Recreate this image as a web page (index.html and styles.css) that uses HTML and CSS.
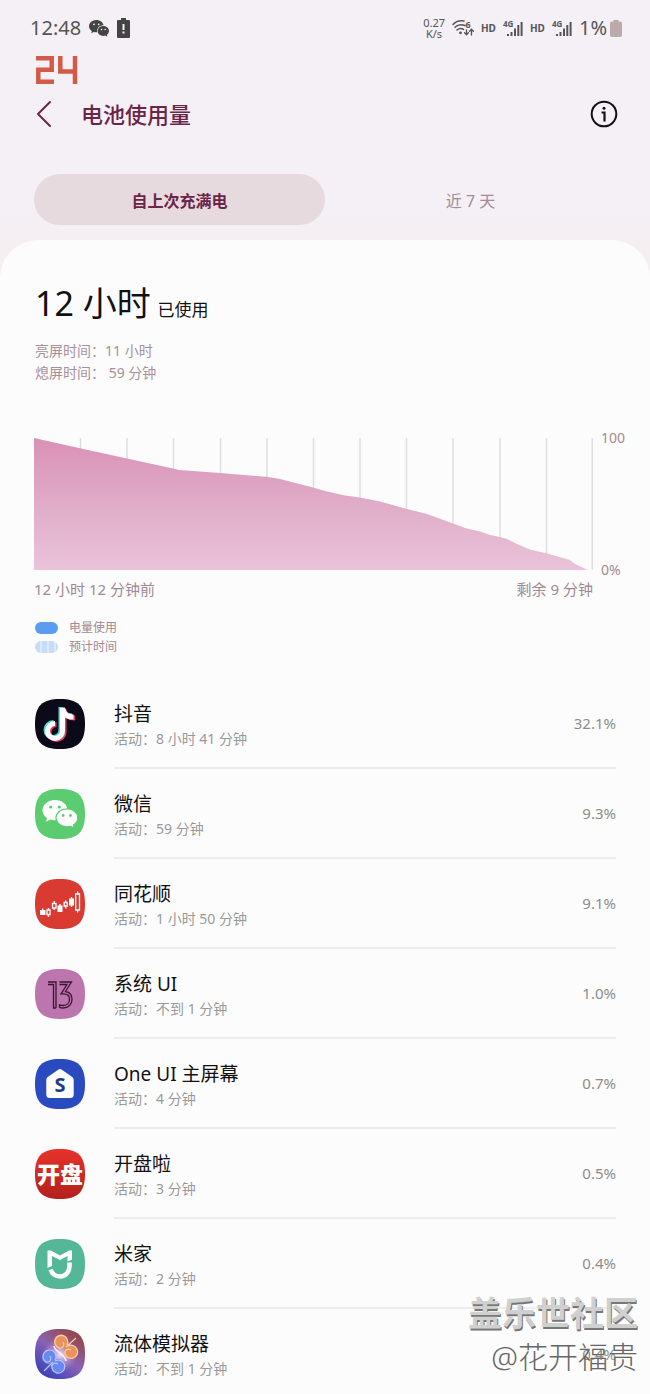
FILE: index.html
```html
<!DOCTYPE html>
<html lang="zh-CN">
<head>
  <meta charset="UTF-8">
  <meta name="viewport" content="width=device-width, initial-scale=1.0">
  <title>电池使用量</title>
  <link rel="stylesheet" href="styles.css">
</head>
<body>
  <div class="status-bar">
    <div class="status-left">
      <span class="clock">12:48</span>
      <svg class="status-wechat" viewBox="0 0 20 17">
        <path fill="#444" d="M7.500 0C3.400 0 0 2.800 0 6.200c0 2 1.100 3.700 2.800 4.800L2.200 13.200l2.600-1.300c.8.2 1.700.4 2.700.4h.6A5.600 5.600 0 0 1 8 11c0-3.300 3-5.700 6.600-5.700C14 2.300 11 0 7.500 0z"/>
        <path fill="#444" d="M20 11c0-2.700-2.500-4.900-5.700-4.900S8.600 8.300 8.600 11s2.500 4.900 5.700 4.900c.7 0 1.400-.1 2-.3l2.100 1.100-.5-1.900C19.200 13.900 20 12.500 20 11z"/>
        <g fill="#f4f0f5"><circle cx="5" cy="4.300" r=".9"/><circle cx="9.700" cy="4.300" r=".9"/><circle cx="12.500" cy="9.500" r=".8"/><circle cx="16.200" cy="9.500" r=".8"/></g>
      </svg>
      <svg class="status-alert" viewBox="0 0 13 20">
        <path fill="#444" d="M4 0h5v2h3a1 1 0 0 1 1 1v16a1 1 0 0 1-1 1H1a1 1 0 0 1-1-1V3a1 1 0 0 1 1-1h3z"/>
        <path fill="#f4f0f5" d="M5.500 6h2v6h-2zM5.500 13.500h2v2h-2z"/>
      </svg>
    </div>
    <div class="status-right">
      <span class="net-speed">0.27<br>K/s</span>
      <svg class="status-wifi" viewBox="0 0 22 18">
        <g fill="none" stroke="#555" stroke-width="1.600" stroke-linecap="round">
          <path d="M1 5.500C4 2.200 8 1.300 12 2"/>
          <path d="M3 8.300c2.500-2.500 6-3.300 10-1.800"/>
          <path d="M5 11c2-1.700 4.500-1.900 6.500-.6"/>
          <path stroke-width="1.300" d="M14.500 11v4.500M12.600 13.800l1.900 2 1.900-2M19.500 16v-5M17.600 12.200l1.900-2 1.900 2"/>
        </g>
        <circle cx="8.500" cy="13.800" r="1.400" fill="#555"/>
        <text x="13.500" y="8.500" font-size="9" font-weight="700" fill="#555">6</text>
      </svg>
      <span class="hd">HD</span>
      <svg class="status-signal" viewBox="0 0 20 18">
        <text x="0" y="8" font-size="8" font-weight="700" fill="#555">4G</text>
        <path fill="#555" d="M4 15h2v2H4zM7.500 13h2v4h-2zM11 9.500h2V17h-2zM14.300 6h2v11h-2zM17.600 3h2v14h-2z"/>
      </svg>
      <span class="hd">HD</span>
      <svg class="status-signal" viewBox="0 0 20 18">
        <text x="0" y="8" font-size="8" font-weight="700" fill="#555">4G</text>
        <path fill="#555" d="M4 15h2v2H4zM7.500 13h2v4h-2zM11 9.500h2V17h-2zM14.300 6h2v11h-2zM17.600 3h2v14h-2z"/>
      </svg>
      <span class="percent">1%</span>
      <svg class="status-battery" viewBox="0 0 12 17">
        <path fill="#baaaaa" d="M3.500 0h5v1.500H10a2 2 0 0 1 2 2V15a2 2 0 0 1-2 2H2a2 2 0 0 1-2-2V3.500a2 2 0 0 1 2-2h1.500z"/>
      </svg>
    </div>
  </div>

  <!-- frame rate counter -->
  <svg class="fps" viewBox="0 0 42 28" role="img" aria-label="24">
    <path fill="none" stroke="#d15b48" stroke-width="4.500" d="M0 2.300h15.700v11.400H2.300v12H18M24.300 0v15.500h15M39 0v28"/>
  </svg>

  <header class="app-header">
    <button type="button" class="back-btn" aria-label="返回">
      <svg viewBox="0 0 16 28"><path d="M14 2L2 14l12 12" fill="none" stroke="#6b2549" stroke-width="2" stroke-linecap="round" stroke-linejoin="round"/></svg>
    </button>
    <h1>电池使用量</h1>
    <button type="button" class="info-btn" aria-label="信息">
      <svg viewBox="0 0 28 28">
        <circle cx="14" cy="14" r="12.300" fill="none" stroke="#111" stroke-width="2"/>
        <circle cx="14" cy="8.200" r="1.500" fill="#111"/>
        <path d="M11.500 12.500H14.500V21.500" fill="none" stroke="#111" stroke-width="2.200"/>
      </svg>
    </button>
  </header>

  <nav class="tabs">
    <button type="button" class="tab active">自上次充满电</button>
    <button type="button" class="tab">近 7 天</button>
  </nav>

  <main class="panel">
    <h2 class="usage-total">12 小时 <small>已使用</small></h2>
    <div class="screen-times">
      <p>亮屏时间：11 小时</p>
      <p>熄屏时间： 59 分钟</p>
    </div>

    <section class="chart">
      <svg class="chart-plot" viewBox="0 0 559 132" preserveAspectRatio="none">
        <defs>
          <linearGradient id="level" x1="0" y1="0" x2="0" y2="1">
            <stop offset="0" stop-color="#da90b6"/>
            <stop offset="0.500" stop-color="#e0acc8"/>
            <stop offset="1" stop-color="#eac3da"/>
          </linearGradient>
        </defs>
        <path stroke="#dedede" stroke-width="1.500" d="M46.500 0v132M93 0v132M139.500 0v132M186.500 0v132M233 0v132M279.500 0v132M326 0v132M372.500 0v132M419 0v132M466 0v132M512.500 0v132M558.300 0v132"/>
        <path fill="url(#level)" d="M0 0L47 10.500L93 20.500L139 30.500L145 32L186 35L234 39L246 41L279 49.500L291 53L311 57.500L326 59.500L346 63.500L373 71L393 76L415 84L426 88L431 90L446 93.500L456 97L466 99L473 101L483 106L496 111.500L513 115.500L536 122L541 126L554 132H0Z"/>
      </svg>
      <div class="chart-y">
        <span>100</span>
        <span>0%</span>
      </div>
      <div class="chart-x">
        <span>12 小时 12 分钟前</span>
        <span>剩余 9 分钟</span>
      </div>
    </section>

    <ul class="legend">
      <li><span class="swatch used"></span>电量使用</li>
      <li><span class="swatch estimated"></span>预计时间</li>
    </ul>

    <ul class="app-list">
      <li class="app">
        <svg class="app-icon" viewBox="0 0 50 50">
          <path fill="#0c0a18" d="M25 0C43 0 50 7 50 25S43 50 25 50 0 43 0 25 7 0 25 0z"/>
          <g fill="none" stroke-width="5">
            <path stroke="#4fd8d8" d="M26 8v23a7.500 7.500 0 1 1-7.500-7.500M26 9c1 5 5 8 11 8"/>
            <path stroke="#ee3d5c" d="M29 10v23a7.500 7.500 0 1 1-7.500-7.500M29 11c1 5 5 8 11 8"/>
            <path stroke="#fff" d="M27.500 9v23a7.500 7.500 0 1 1-7.500-7.500M27.500 9c1 6 5 9 11 9"/>
          </g>
        </svg>
        <div class="app-body">
          <div class="app-text"><h3>抖音</h3><p>活动：8 小时 41 分钟</p></div>
          <span class="app-percent">32.1%</span>
        </div>
      </li>
      <li class="app">
        <svg class="app-icon" viewBox="0 0 50 50">
          <path fill="#5bcd70" d="M25 0C43 0 50 7 50 25S43 50 25 50 0 43 0 25 7 0 25 0z"/>
          <path fill="#fff" d="M20 11C13 11 7.500 15.500 7.500 21.300c0 3.300 1.800 6 4.500 7.900l-1 3.600 4.300-2.200c1.500.4 3 .6 4.700.6 7 0 12.500-4.400 12.500-9.900S27 11 20 11z"/>
          <path fill="#fff" stroke="#5bcd70" stroke-width="1.200" d="M32 19.800c-6.200 0-11 4-11 9s4.800 9 11 9c1.300 0 2.600-.2 3.800-.5l3.600 1.900-.9-3.200c2.700-1.700 4.400-4.200 4.400-7.200 0-5-4.700-9-10.900-9z"/>
          <g fill="#5bcd70"><circle cx="15.700" cy="18" r="1.600"/><circle cx="24.300" cy="18" r="1.600"/><circle cx="28.200" cy="26.500" r="1.400"/><circle cx="35.500" cy="26.500" r="1.400"/></g>
        </svg>
        <div class="app-body">
          <div class="app-text"><h3>微信</h3><p>活动：59 分钟</p></div>
          <span class="app-percent">9.3%</span>
        </div>
      </li>
      <li class="app">
        <svg class="app-icon" viewBox="0 0 50 50">
          <path fill="#d93a32" d="M25 0C43 0 50 7 50 25S43 50 25 50 0 43 0 25 7 0 25 0z"/>
          <path fill="#fff" d="M5 31h5.500v5H5zM22.500 26.500h5v6.500h-5zM34 19.500h5v7h-5z"/>
          <g fill="none" stroke="#fff" stroke-width="1.300">
            <path d="M7.700 29.500v2M25 25v2M36.500 18v10"/>
            <path d="M12 31h3v4.500h-3zM13.500 29v2M13.500 35.500V38M17.500 24.500h3.500v4.500h-3.500zM19.200 22v2.500M19.200 29v2M29.200 23.500h3v3.500h-3zM30.700 21.500v2M30.700 27v2.500M40.700 15h3.800v16h-3.800zM42.600 12.500V15M42.600 31v2.500"/>
          </g>
        </svg>
        <div class="app-body">
          <div class="app-text"><h3>同花顺</h3><p>活动：1 小时 50 分钟</p></div>
          <span class="app-percent">9.1%</span>
        </div>
      </li>
      <li class="app">
        <svg class="app-icon" viewBox="0 0 50 50">
          <path fill="#bd75ad" d="M25 0C43 0 50 7 50 25S43 50 25 50 0 43 0 25 7 0 25 0z"/>
          <g fill="none" stroke="#3a1533" stroke-width="1.300">
            <path d="M13 13h8v26M13 15.500h5.500V39H21"/>
            <path d="M24.500 13h12l-6 9.500c4 .7 6.500 4 6.500 8 0 4.800-3.500 8.500-9 8.500-1.300 0-2.500-.2-3.500-.6M24.500 15.500h7.500l-6 9.300h2.500c3.700 0 6 2.200 6 5.700 0 3.600-2.700 6-6.500 6-1.300 0-2.500-.2-3.500-.6v2.600"/>
          </g>
        </svg>
        <div class="app-body">
          <div class="app-text"><h3>系统 UI</h3><p>活动：不到 1 分钟</p></div>
          <span class="app-percent">1.0%</span>
        </div>
      </li>
      <li class="app">
        <svg class="app-icon" viewBox="0 0 50 50">
          <path fill="#2a4bc0" d="M25 0C43 0 50 7 50 25S43 50 25 50 0 43 0 25 7 0 25 0z"/>
          <path fill="#fff" d="M23.200 10.700a3 3 0 0 1 3.600 0l10.500 7.300a3.500 3.500 0 0 1 1.400 2.800v14.700a3.500 3.500 0 0 1-3.500 3.500H14.800a3.500 3.500 0 0 1-3.500-3.500V20.800a3.500 3.500 0 0 1 1.400-2.800z"/>
          <text x="25" y="33" font-size="20" font-weight="700" text-anchor="middle" fill="#1f3a8c">S</text>
        </svg>
        <div class="app-body">
          <div class="app-text"><h3>One UI 主屏幕</h3><p>活动：4 分钟</p></div>
          <span class="app-percent">0.7%</span>
        </div>
      </li>
      <li class="app">
        <svg class="app-icon" viewBox="0 0 50 50">
          <defs><linearGradient id="kaipan" x1="0" y1="0" x2="0" y2="1"><stop offset="0" stop-color="#e6332a"/><stop offset="1" stop-color="#b3201c"/></linearGradient></defs>
          <path fill="url(#kaipan)" d="M25 0C43 0 50 7 50 25S43 50 25 50 0 43 0 25 7 0 25 0z"/>
          <text x="25" y="34" font-size="23" font-weight="900" text-anchor="middle" fill="#fff">开盘</text>
        </svg>
        <div class="app-body">
          <div class="app-text"><h3>开盘啦</h3><p>活动：3 分钟</p></div>
          <span class="app-percent">0.5%</span>
        </div>
      </li>
      <li class="app">
        <svg class="app-icon" viewBox="0 0 50 50">
          <path fill="#54b798" d="M25 0C43 0 50 7 50 25S43 50 25 50 0 43 0 25 7 0 25 0z"/>
          <path fill="#fff" d="M12.500 11.500h3.500l9 5 9-5h3v9l-4.500 2v-5.500l-7.500 4-8-4V27l-4.500 2z"/>
          <path fill="none" stroke="#fff" stroke-width="4.500" d="M34.500 23.500V27c0 6-4 10.500-9.500 10.500-4.500 0-8-2.500-9.300-7"/>
        </svg>
        <div class="app-body">
          <div class="app-text"><h3>米家</h3><p>活动：2 分钟</p></div>
          <span class="app-percent">0.4%</span>
        </div>
      </li>
      <li class="app">
        <svg class="app-icon" viewBox="0 0 50 50">
          <defs>
            <linearGradient id="fluid" x1="0.800" y1="0.100" x2="0.200" y2="0.900"><stop offset="0" stop-color="#94484f"/><stop offset="0.500" stop-color="#8a62b4"/><stop offset="1" stop-color="#3f45b8"/></linearGradient>
            <radialGradient id="glow"><stop offset="0" stop-color="#fff" stop-opacity=".8"/><stop offset="1" stop-color="#e8b0e8" stop-opacity="0"/></radialGradient>
          </defs>
          <path fill="url(#fluid)" d="M25 0C43 0 50 7 50 25S43 50 25 50 0 43 0 25 7 0 25 0z"/>
          <circle cx="25" cy="26" r="17" fill="url(#glow)"/>
          <g fill="#e8935f"><circle cx="26" cy="12.500" r="7"/><circle cx="36" cy="23" r="7"/></g>
          <g fill="#6a88f0"><circle cx="14" cy="28" r="7"/><circle cx="23" cy="37" r="7"/></g>
          <g fill="none" stroke-width="1.200">
            <path stroke="#ffcf9c" d="M32 16a6.500 6.500 0 1 0-8 3c4 1 6-3 4-6M33 17a6.500 6.500 0 1 1-3 8c-1-4 3-6 6-4M31 18l10-9"/>
            <path stroke="#b4c6ff" d="M20 31a6.500 6.500 0 1 0-9 2c4 1 6-3 4-6M20 32a6.500 6.500 0 1 1-3 7c-1-4 3-6 6-4M18 33l-9 9"/>
            <path stroke="#fff0fa" stroke-width="1.600" d="M19 17c1 7 11 7 12 15"/>
          </g>
        </svg>
        <div class="app-body">
          <div class="app-text"><h3>流体模拟器</h3><p>活动：不到 1 分钟</p></div>
          <span class="app-percent">0.4%</span>
        </div>
      </li>
    </ul>
  </main>

  <div class="watermark">
    <p class="watermark-site">盖乐世社区</p>
    <p class="watermark-user">@花开福贵</p>
  </div>
</body>
</html>
```
FILE: styles.css
```css
* {
  box-sizing: border-box;
}

body {
  position: relative;
  margin: 0;
  background: linear-gradient(#f4f0f6 0, #f4f0f5 200px, #f6eeef 280px);
  font-family: "Noto Sans", "Noto Sans CJK SC", sans-serif;
  color: #111;
}

h1, h2, h3, p, ul {
  margin: 0;
  padding: 0;
  font-weight: 400;
}

ul {
  list-style: none;
}

svg {
  display: block;
}

button {
  padding: 0;
  border: none;
  background: none;
  font: inherit;
  cursor: pointer;
}

.status-bar {
  display: flex;
  justify-content: space-between;
  align-items: center;
  height: 56px;
  padding: 0 28px 0 30px;
  color: #555;
}

.status-left, .status-right {
  display: flex;
  align-items: center;
}

.status-left {
  gap: 8px;
}

.status-right {
  gap: 7px;
}

.clock, .percent {
  font-size: 20px;
  line-height: 24px;
}

.percent {
  margin-right: -4px;
}

.status-wechat {
  width: 20px;
  height: 17px;
}

.status-alert {
  width: 13px;
  height: 20px;
}

.net-speed {
  font-size: 11px;
  line-height: 11px;
  text-align: center;
}

.status-wifi {
  width: 22px;
  height: 18px;
  overflow: visible;
}

.hd {
  font-size: 10px;
  font-weight: 700;
}

.status-signal {
  width: 20px;
  height: 18px;
  overflow: visible;
}

.status-battery {
  width: 12px;
  height: 17px;
}

.fps {
  width: 42px;
  height: 28px;
  margin-left: 36px;
}

.app-header {
  display: flex;
  align-items: center;
  height: 60px;
  padding: 0 32px 0 36px;
}

.back-btn svg {
  width: 16px;
  height: 28px;
}

.app-header h1 {
  flex: 1;
  margin-left: 29px;
  font-size: 22px;
  line-height: 28px;
  font-weight: 500;
  color: #6b2549;
}

.info-btn svg {
  width: 28px;
  height: 28px;
}

.tabs {
  display: flex;
  padding: 30px 34px 15px;
}

.tab {
  flex: 1;
  height: 51px;
  border-radius: 26px;
  font-size: 16px;
  color: #a58a98;
}

.tab.active {
  background: #e6dade;
  font-weight: 700;
  color: #6b2549;
}

.panel {
  padding: 39px 34px 0 35px;
  border-radius: 38px 38px 0 0;
  background: #fcfcfc;
}

.usage-total {
  font-size: 34px;
  line-height: 48px;
}

.usage-total small {
  margin-left: -2px;
  font-size: 17px;
}

.screen-times {
  margin-top: 6px;
  font-size: 14px;
  line-height: 22px;
  color: #a8909a;
}

.chart {
  display: grid;
  grid-template-columns: 1fr 23px;
  column-gap: 8px;
  margin: 54px -8px 0 -1px;
  font-size: 14px;
  line-height: 20px;
  color: #a08a92;
}

.chart-plot {
  width: 100%;
  height: 132px;
}

.chart-y {
  display: flex;
  flex-direction: column;
  justify-content: space-between;
  margin: -10px 0;
}

.chart-x {
  display: flex;
  justify-content: space-between;
  margin-top: 9px;
  font-size: 15px;
}

.legend {
  margin-top: 19px;
  font-size: 12px;
  line-height: 19px;
  color: #a08a92;
}

.legend li {
  display: flex;
  align-items: center;
  gap: 11px;
}

.swatch {
  width: 23px;
  height: 12px;
  border-radius: 6px;
}

.swatch.used {
  background: #5a9cf0;
}

.swatch.estimated {
  background: repeating-linear-gradient(90deg, #c6dcf8 0, #c6dcf8 5px, #dce9fb 5px, #dce9fb 7px);
}

.app-list {
  margin-top: 23px;
}

.app {
  display: flex;
  align-items: center;
  gap: 29px;
}

.app-icon {
  width: 50px;
  height: 50px;
}

.app-body {
  flex: 1;
  display: flex;
  justify-content: space-between;
  align-items: center;
  height: 90px;
  border-bottom: 2px solid #ededed;
}

.app:last-child .app-body {
  height: 89px;
  border-bottom: none;
}

.app-text {
  padding-top: 5px;
}

.app-text h3 {
  font-size: 19px;
  line-height: 26px;
}

.app-text p {
  font-size: 14px;
  line-height: 24px;
  color: #999;
}

.app-percent {
  font-size: 15px;
  color: #8c8c8c;
}

.watermark {
  position: absolute;
  right: 12px;
  bottom: 21px;
  text-align: right;
}

.watermark-site {
  font-size: 34px;
  line-height: 48px;
  font-weight: 700;
  color: #d0d0d0;
  text-shadow: 1px 2px 0 #777;
}

.watermark-user {
  font-size: 30px;
  line-height: 40px;
  font-weight: 300;
  color: #666;
}
```
